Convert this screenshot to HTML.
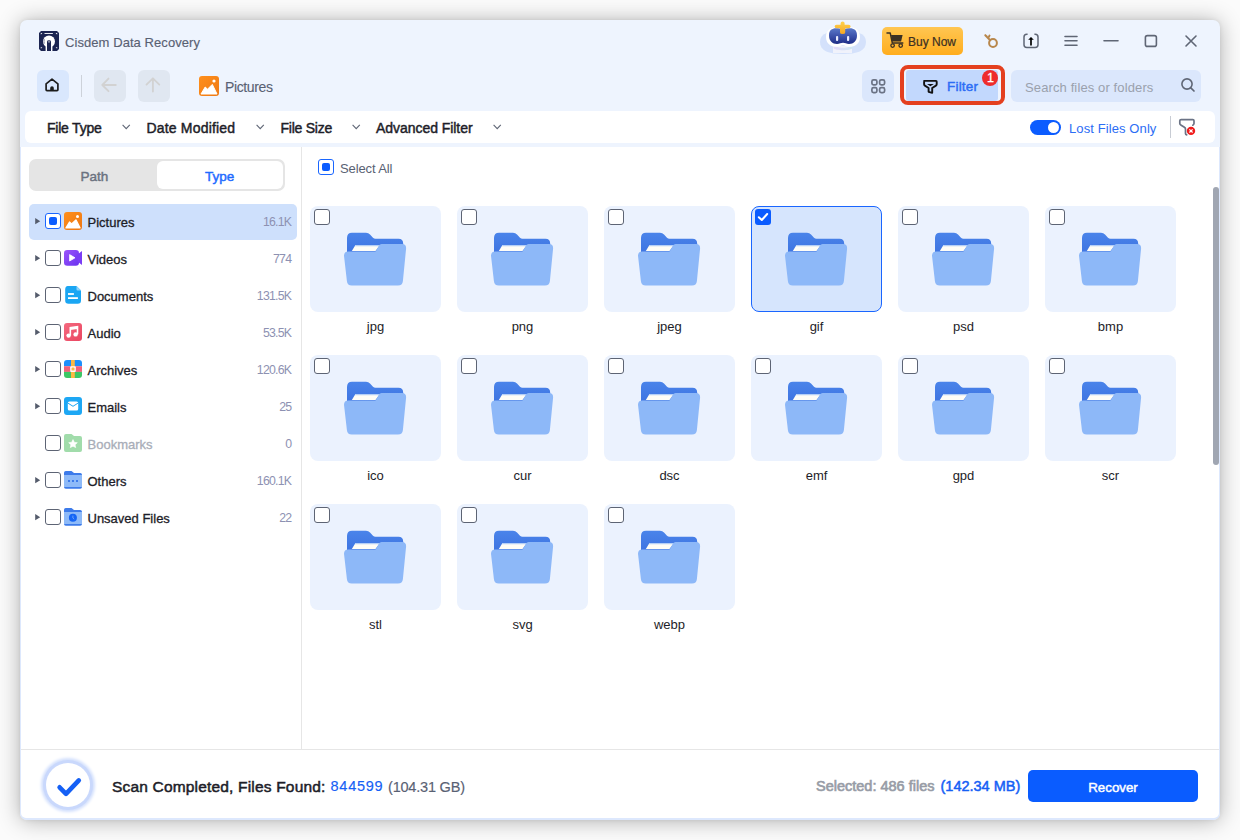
<!DOCTYPE html><html><head><meta charset="utf-8"><style>
*{box-sizing:border-box;margin:0;padding:0}
html,body{width:1240px;height:840px;overflow:hidden;background:#fbfbfb;font-family:"Liberation Sans",sans-serif}
.a{position:absolute}
.t{position:absolute;white-space:nowrap;line-height:1}
svg{position:absolute;overflow:visible}
#win{left:20px;top:20px;width:1200px;height:800px;border-radius:7px;background:#eef4fe;box-shadow:0 1px 22px rgba(0,0,0,.30),0 0 4px rgba(0,0,0,.08)}
.cb{position:absolute;width:16px;height:16px;border:1.3px solid #5d6474;border-radius:3px;background:#fff}
.card{position:absolute;width:131px;height:106px;border-radius:8px;background:#ebf2fe}
.lbl{position:absolute;width:131px;text-align:center;font-size:13px;color:#1d1d28;white-space:nowrap;line-height:1}
</style></head><body>
<div id="win" class="a"></div>
<svg style="left:39px;top:31px" width="20" height="20" viewBox="0 0 20 20">
<path d="M2,0 H18 L20,2 V18 L18,20 H2 L0,18 V2 Z" fill="#1c2552"/>
<rect x="5.4" y="2" width="8.6" height="1.1" rx=".5" fill="#e6e8ef"/>
<path d="M1.8,1.8 L3.4,2.6 L1.8,3.4 Z M18.2,1.8 L16.6,2.6 L18.2,3.4 Z M1.8,16 L3.4,16.8 L1.8,17.6 Z M18.2,16 L16.6,16.8 L18.2,17.6 Z" fill="#fff"/>
<circle cx="10" cy="10.5" r="6" fill="#fff"/>
<rect x="6.6" y="10.5" width="6.8" height="9.5" fill="#fff"/>
<path d="M8,20 V10.6 Q8,9.2 10,9.2 Q12,9.2 12,10.6 V20 Z" fill="#1c2552"/>
<rect x="9.3" y="10.4" width="1.4" height="1" fill="#fff"/>
<path d="M5.4,8.2 Q4.6,10.5 5.4,12.6" fill="none" stroke="#1c2552" stroke-width=".5"/>
</svg>
<div class="t" style="left:65px;top:36px;font-size:13px;color:#596173;-webkit-text-stroke:.15px #596173;letter-spacing:.07px">Cisdem Data Recovery</div>
<svg style="left:815px;top:18px" width="55" height="40" viewBox="0 0 55 40">
<defs><linearGradient id="vis" x1="0" y1="0" x2="0" y2="1"><stop offset="0" stop-color="#5a78c8"/><stop offset=".55" stop-color="#3a4fa8"/><stop offset="1" stop-color="#1e2d86"/></linearGradient>
<linearGradient id="star" x1="0" y1="0" x2="0" y2="1"><stop offset="0" stop-color="#ffd24e"/><stop offset="1" stop-color="#f5a623"/></linearGradient>
<linearGradient id="body" x1="0" y1="0" x2="1" y2="0"><stop offset="0" stop-color="#e3d8fb"/><stop offset="1" stop-color="#cfe8f2"/></linearGradient></defs>
<path d="M5,24 C5,15 14,13 28,13 C42,13 51,15 51,24 C51,33 42,36 28,36 C14,36 5,33 5,24 Z" fill="#d0dffb" opacity=".9"/>
<path d="M18,28 H37 V35 H18 Z" fill="#f0f2fb"/>
<path d="M18.5,26 C20,31 36,31 37.5,26 V30 C36,33 20,33 18.5,30 Z" fill="url(#body)"/>
<path d="M11,19 C11,11 17,8.5 28,8.5 C39,8.5 45,11 45,19 C45,25.5 40.5,28.8 34,28.8 C31,28.8 30,27.3 28,27.3 C26,27.3 25,28.8 22,28.8 C15.5,28.8 11,25.5 11,19 Z" fill="#fff"/>
<path d="M14,17.5 C14,12.2 17,10.3 21,10.3 C24,10.3 25,11 28,11 C31,11 32,10.3 35,10.3 C39,10.3 42,12.2 42,17.5 C42,23 38.5,26 34,26 C31.5,26 30,24.8 28,24.8 C26,24.8 24.5,26 22,26 C17.5,26 14,23 14,17.5 Z" fill="url(#vis)"/>
<rect x="21" y="18" width="2.2" height="5" rx=".9" fill="#e8ecff"/>
<rect x="32" y="18" width="2.2" height="5" rx=".9" fill="#e8ecff"/>
<path d="M25.6,5.2 Q25.6,3.4 27.6,3.4 Q29.6,3.4 29.6,5.2 V6.8 H33.6 Q35.6,6.8 35.6,8.5 Q35.6,10.2 33.6,10.2 H30.2 V14.5 Q30.2,16 27.6,16 Q25,16 25,14.5 V10.2 H21.6 Q19.6,10.2 19.6,8.5 Q19.6,6.8 21.6,6.8 H25.6 Z" fill="url(#star)"/>
</svg>
<div class="a" style="left:882px;top:27px;width:81px;height:28px;border-radius:5px;background:linear-gradient(#ffc652,#ffad1e)"></div>
<svg style="left:886px;top:32px" width="18" height="18" viewBox="0 0 18 18">
<path d="M1,0.9 H4.2 L6.3,10.9 H16.8" fill="none" stroke="#3b3024" stroke-width="1.5" stroke-linejoin="round" stroke-linecap="round"/>
<path d="M5,3.1 H16.6 L15.1,9.4 H6.2 Z" fill="#3b3024"/>
<circle cx="6.6" cy="13.6" r="1.75" fill="none" stroke="#3b3024" stroke-width="1.3"/>
<circle cx="14.7" cy="13.6" r="1.75" fill="none" stroke="#3b3024" stroke-width="1.3"/>
</svg>
<div class="t" style="left:908px;top:35.5px;font-size:12px;color:#3b2f22;-webkit-text-stroke:.2px #3b2f22">Buy Now</div>
<svg style="left:980px;top:30px" width="20" height="20" viewBox="0 0 20 20">
<circle cx="13" cy="13" r="3.9" fill="none" stroke="#b8874c" stroke-width="2"/>
<path d="M10.2,10.2 L5.3,5.3 M5.3,5.3 L6.8,6.6 M8.3,7.9 L9.5,5.6" fill="none" stroke="#b8874c" stroke-width="2" stroke-linecap="round"/>
</svg>
<svg style="left:1023px;top:33px" width="16" height="16" viewBox="0 0 16 16">
<path d="M4.6,1.2 H3.8 Q1,1.2 1,4 V11.8 Q1,14.4 3.8,14.4 H12.2 Q15,14.4 15,11.8 V4 Q15,1.2 12.2,1.2 H11.4" fill="none" stroke="#5f6675" stroke-width="1.5"/>
<path d="M8,11.8 V5.5" stroke="#000" stroke-width="1.7" stroke-linecap="round"/>
<path d="M5.2,6.8 L8,4 L10.8,6.8 Z" fill="#000"/>
</svg>
<svg style="left:1060px;top:30px" width="140" height="20" viewBox="0 0 140 20">
<g stroke="#5f6675" stroke-width="1.6" fill="none" stroke-linecap="round">
<path d="M5,6.5 H17 M5,10.7 H17 M5,15.2 H17"/>
<path d="M44,10.7 H58"/>
<rect x="85.4" y="5.6" width="11" height="10.8" rx="2"/>
<path d="M126,6 L136,16 M136,6 L126,16"/>
</g></svg>
<div class="a" style="left:37px;top:70px;width:32px;height:32px;border-radius:6px;background:#d9e7fd"></div>
<svg style="left:40px;top:72px" width="26" height="26" viewBox="0 0 26 26">
<path d="M6.1,11.8 L12,7.2 L17.9,11.8 V17.8 Q17.9,18.7 17,18.7 H7 Q6.1,18.7 6.1,17.8 Z" fill="none" stroke="#1c1c1c" stroke-width="1.7" stroke-linejoin="round"/>
<path d="M10.2,18.7 V15.9 Q10.2,14.3 12,14.3 Q13.8,14.3 13.8,15.9 V18.7 Z" fill="#1c1c1c"/>
</svg>
<div class="a" style="left:81px;top:75px;width:1px;height:22px;background:#cdd2da"></div>
<div class="a" style="left:94px;top:70px;width:32px;height:32px;border-radius:6px;background:#e0e7f1"></div>
<div class="a" style="left:138px;top:70px;width:32px;height:32px;border-radius:6px;background:#e0e7f1"></div>
<svg style="left:94px;top:70px" width="76" height="32" viewBox="0 0 76 32">
<g stroke="#d2d2d2" stroke-width="1.85" fill="none" stroke-linecap="round" stroke-linejoin="round">
<path d="M21.8,15 H8.3 M14.5,8.6 L8.3,15 L14.5,21.2"/>
<path d="M58.9,21.6 V8.5 M52.5,14.6 L58.9,8.3 L65.3,14.6"/>
</g></svg>
<svg style="left:199px;top:76px" width="20" height="20" viewBox="0 0 20 20">
<defs><linearGradient id="og" x1="0" y1="0" x2="1" y2="1"><stop offset="0" stop-color="#ff8f1c"/><stop offset="1" stop-color="#ee7a15"/></linearGradient></defs>
<rect width="20" height="20" rx="3" fill="url(#og)"/>
<path d="M2,18 L6.2,11 L8.5,13.2 L13.3,8.4 L18,18 Z" fill="#fff" stroke="#fff" stroke-width="1" stroke-linejoin="round"/>
<circle cx="15" cy="5" r="1.6" fill="#fff"/>
</svg>
<div class="t" style="left:225px;top:79.8px;font-size:14px;color:#596173;letter-spacing:-.37px;-webkit-text-stroke:.1px #596173">Pictures</div>
<div class="a" style="left:862px;top:70px;width:32px;height:32px;border-radius:6px;background:#dbe7fc"></div>
<svg style="left:866px;top:74px" width="24" height="24" viewBox="0 0 24 24">
<g fill="none" stroke="#6b7385" stroke-width="1.7">
<rect x="5.9" y="5.9" width="5" height="5" rx="1.6"/><rect x="13.6" y="5.9" width="5" height="5" rx="1.6"/>
<rect x="5.9" y="13.6" width="5" height="5" rx="1.6"/><rect x="13.6" y="13.6" width="5" height="5" rx="1.6"/>
</g></svg>
<div class="a" style="left:900px;top:65px;width:105px;height:40px;border:4px solid #e4401f;border-radius:8px"></div>
<div class="a" style="left:906px;top:70px;width:92px;height:31px;background:#c2d8fd;border-radius:3px"></div>
<svg style="left:918px;top:74px" width="24" height="24" viewBox="0 0 24 24">
<path d="M6.1,6.9 H18 Q18.7,6.9 18.7,7.7 V10.3 Q18.7,11.1 17.9,11.6 L14.2,14 V18.8 L10.6,17.8 V14 L6.9,11.6 Q6.1,11.1 6.1,10.3 V7.7 Q6.1,6.9 6.9,6.9 Z" fill="none" stroke="#111" stroke-width="1.9" stroke-linejoin="round"/>
<path d="M9,10 H15.8 L12.4,12.3 Z" fill="#111"/>
</svg>
<div class="t" style="left:947px;top:80.4px;font-size:13.5px;color:#2c6df5;-webkit-text-stroke:.45px #2c6df5;letter-spacing:.2px">Filter</div>
<div class="a" style="left:982px;top:70px;width:16px;height:16px;border-radius:50%;background:#ee2c2c"></div>
<div class="t" style="left:982.5px;top:72px;width:16px;text-align:center;font-size:12.5px;color:#fff;-webkit-text-stroke:.3px #fff">1</div>
<div class="a" style="left:1011px;top:70px;width:190px;height:32px;border-radius:6px;background:#dbe7fc"></div>
<div class="t" style="left:1025px;top:81px;font-size:13px;color:#9aa1ad;letter-spacing:.12px">Search files or folders</div>
<svg style="left:1175px;top:73px" width="24" height="24" viewBox="0 0 24 24">
<circle cx="12" cy="11" r="5.1" fill="none" stroke="#5f6675" stroke-width="1.6"/>
<path d="M15.8,14.8 L19,18" stroke="#5f6675" stroke-width="1.7" stroke-linecap="round"/>
</svg>
<div class="a" style="left:25px;top:111px;width:1190px;height:32px;background:#fff;border-radius:6px"></div>
<div class="t" style="left:47px;top:121.3px;font-size:14px;color:#1d1d28;-webkit-text-stroke:.45px #1d1d28;letter-spacing:-.22px">File Type</div>
<svg style="left:122px;top:124px" width="9" height="6" viewBox="0 0 9 6"><path d="M.6,.8 L4.2,4.6 L7.8,.8" fill="none" stroke="#5f6675" stroke-width="1.1"/></svg>
<div class="t" style="left:146.5px;top:121.3px;font-size:14px;color:#1d1d28;-webkit-text-stroke:.45px #1d1d28;letter-spacing:.18px">Date Modified</div>
<svg style="left:255.6px;top:124px" width="9" height="6" viewBox="0 0 9 6"><path d="M.6,.8 L4.2,4.6 L7.8,.8" fill="none" stroke="#5f6675" stroke-width="1.1"/></svg>
<div class="t" style="left:280.5px;top:121.3px;font-size:14px;color:#1d1d28;-webkit-text-stroke:.45px #1d1d28;letter-spacing:-.25px">File Size</div>
<svg style="left:351.7px;top:124px" width="9" height="6" viewBox="0 0 9 6"><path d="M.6,.8 L4.2,4.6 L7.8,.8" fill="none" stroke="#5f6675" stroke-width="1.1"/></svg>
<div class="t" style="left:376px;top:121.3px;font-size:14px;color:#1d1d28;-webkit-text-stroke:.45px #1d1d28;letter-spacing:-.05px">Advanced Filter</div>
<svg style="left:492.8px;top:124px" width="9" height="6" viewBox="0 0 9 6"><path d="M.6,.8 L4.2,4.6 L7.8,.8" fill="none" stroke="#5f6675" stroke-width="1.1"/></svg>
<div class="a" style="left:1030px;top:120px;width:31px;height:15px;border-radius:8px;background:#0b5cff"></div>
<div class="a" style="left:1048px;top:122px;width:11px;height:11px;border-radius:50%;background:#fff"></div>
<div class="t" style="left:1069px;top:122px;font-size:13px;color:#2c6df5;letter-spacing:.1px">Lost Files Only</div>
<div class="a" style="left:1170px;top:116px;width:1px;height:22px;background:#c8ccd4"></div>
<svg style="left:1175px;top:115px" width="24" height="24" viewBox="0 0 24 24">
<path d="M17.8,10.2 Q19,9.6 19,8.6 V5.8 Q19,4.6 17.8,4.6 H6.1 Q4.8,4.6 4.8,5.8 V8.6 Q4.8,9.5 5.8,10 L9.4,12.2 Q10.5,12.9 10.5,14 V18.5 Q10.5,19.6 11.7,19.8" fill="none" stroke="#6b7385" stroke-width="1.7" stroke-linecap="round"/>
<circle cx="16" cy="15.9" r="4.2" fill="#f01c1c"/>
<path d="M14.4,14.3 L17.6,17.5 M17.6,14.3 L14.4,17.5" stroke="#fff" stroke-width="1.2"/>
</svg>
<div class="a" style="left:20px;top:147px;width:1200px;height:673px;background:#dde8fd;border-radius:0 0 7px 7px"></div>
<div class="a" style="left:21px;top:147px;width:1198px;height:671px;background:#fff;border-radius:0 0 5px 5px"></div>
<div class="a" style="left:301px;top:147px;width:1px;height:602px;background:#e6e6e6"></div>
<div class="a" style="left:21px;top:749px;width:1198px;height:1px;background:#e6e6e6"></div>
<div class="a" style="left:29px;top:159px;width:256px;height:32px;border-radius:7px;background:#e5e5e5"></div>
<div class="a" style="left:157px;top:161px;width:126px;height:28px;border-radius:6px;background:#fff"></div>
<div class="t" style="left:80.5px;top:169.6px;font-size:13.5px;color:#6b7280;-webkit-text-stroke:.45px #6b7280">Path</div>
<div class="t" style="left:205px;top:169.6px;font-size:13.5px;color:#1f6bff;-webkit-text-stroke:.45px #1f6bff">Type</div>
<div class="a" style="left:29px;top:204px;width:268px;height:36px;border-radius:5px;background:#cee0fc"></div>
<svg style="left:35px;top:218px" width="6" height="7" viewBox="0 0 6 7"><path d="M.2,.1 L5.2,3.2 L.2,6.3 Z" fill="#555c6c"/></svg>
<div class="cb" style="left:45px;top:213px;border-color:#1a66ff"><div class="a" style="left:2.7px;top:2.7px;width:8px;height:8px;border-radius:2px;background:#0b5cff"></div></div>
<svg style="left:64px;top:212px" width="18" height="18" viewBox="0 0 18 18"><defs><linearGradient id="og2" x1="0" y1="0" x2="1" y2="1"><stop offset="0" stop-color="#ff8f1c"/><stop offset="1" stop-color="#ec7714"/></linearGradient></defs>
<rect width="18" height="18" rx="3" fill="url(#og2)"/>
<path d="M2,15.9 L5.5,10 L7.6,11.9 L11.9,7.9 L16,15.9 Z" fill="#fff" stroke="#fff" stroke-width="1.3" stroke-linejoin="round"/>
<circle cx="13.5" cy="4.5" r="1.5" fill="#fff"/></svg>
<div class="t" style="left:87.5px;top:215.5px;font-size:13px;color:#1d1d28;-webkit-text-stroke:.3px #1d1d28">Pictures</div>
<div class="t" style="right:948.7px;top:216px;font-size:12.3px;color:#8d91b2;letter-spacing:-.75px">16.1K</div>
<svg style="left:35px;top:255px" width="6" height="7" viewBox="0 0 6 7"><path d="M.2,.1 L5.2,3.2 L.2,6.3 Z" fill="#555c6c"/></svg>
<div class="cb" style="left:45px;top:250px"></div>
<svg style="left:64px;top:249px" width="18" height="18" viewBox="0 0 18 18"><defs><linearGradient id="vg" x1="0" y1="0" x2="1" y2="1"><stop offset="0" stop-color="#9b55fa"/><stop offset="1" stop-color="#6a32f0"/></linearGradient></defs>
<rect x="0" y="1" width="15" height="15.7" rx="3.2" fill="url(#vg)"/>
<path d="M13.5,5.5 L18,2 V16 L13.5,12.5 Z" fill="#7a3df5"/>
<path d="M5.6,5.6 L11,8.8 L5.6,12 Z" fill="#fff" stroke="#fff" stroke-width=".8" stroke-linejoin="round"/></svg>
<div class="t" style="left:87.5px;top:252.5px;font-size:13px;color:#1d1d28;-webkit-text-stroke:.3px #1d1d28">Videos</div>
<div class="t" style="right:948.7px;top:253px;font-size:12.3px;color:#8d91b2;letter-spacing:-.75px">774</div>
<svg style="left:35px;top:292px" width="6" height="7" viewBox="0 0 6 7"><path d="M.2,.1 L5.2,3.2 L.2,6.3 Z" fill="#555c6c"/></svg>
<div class="cb" style="left:45px;top:287px"></div>
<svg style="left:64px;top:286px" width="18" height="18" viewBox="0 0 18 18"><path d="M3.7,0 H12.5 L17,4.5 V14.5 Q17,17.8 13.7,17.8 H4.5 Q1.2,17.8 1.2,14.5 V3.5 Q1.2,0 3.7,0 Z" fill="#1aa6f3"/>
<path d="M12.5,0 L17,4.5 H13.5 Q12.5,4.5 12.5,3.5 Z" fill="#8dd3fb"/>
<rect x="4" y="7.1" width="5.9" height="1.8" fill="#fff"/><rect x="4" y="11.2" width="9.9" height="1.8" fill="#fff"/></svg>
<div class="t" style="left:87.5px;top:289.5px;font-size:13px;color:#1d1d28;-webkit-text-stroke:.3px #1d1d28">Documents</div>
<div class="t" style="right:948.7px;top:290px;font-size:12.3px;color:#8d91b2;letter-spacing:-.75px">131.5K</div>
<svg style="left:35px;top:329px" width="6" height="7" viewBox="0 0 6 7"><path d="M.2,.1 L5.2,3.2 L.2,6.3 Z" fill="#555c6c"/></svg>
<div class="cb" style="left:45px;top:324px"></div>
<svg style="left:64px;top:323px" width="18" height="18" viewBox="0 0 18 18"><defs><linearGradient id="ag" x1="0" y1="0" x2="1" y2="1"><stop offset="0" stop-color="#f46a80"/><stop offset="1" stop-color="#ea4560"/></linearGradient></defs>
<rect width="18" height="18" rx="3" fill="url(#ag)"/>
<path d="M6.3,12.4 V4.6 L13.5,3.6 V11.2" fill="none" stroke="#fff" stroke-width="1.6"/>
<path d="M6.3,4.6 L13.5,3.6 V6 L6.3,7 Z" fill="#fff"/>
<circle cx="4.6" cy="12.6" r="2.2" fill="#fff"/><circle cx="11.6" cy="11.4" r="2.2" fill="#fff"/></svg>
<div class="t" style="left:87.5px;top:326.5px;font-size:13px;color:#1d1d28;-webkit-text-stroke:.3px #1d1d28">Audio</div>
<div class="t" style="right:948.7px;top:327px;font-size:12.3px;color:#8d91b2;letter-spacing:-.75px">53.5K</div>
<svg style="left:35px;top:366px" width="6" height="7" viewBox="0 0 6 7"><path d="M.2,.1 L5.2,3.2 L.2,6.3 Z" fill="#555c6c"/></svg>
<div class="cb" style="left:45px;top:361px"></div>
<svg style="left:64px;top:360px" width="18" height="18" viewBox="0 0 18 18"><clipPath id="arc"><rect width="18" height="18" rx="3"/></clipPath>
<g clip-path="url(#arc)"><rect width="18" height="6.2" fill="#1e8ffb"/><rect y="6.2" width="18" height="5.7" fill="#f2617a"/><rect y="11.9" width="18" height="6.1" fill="#3cc766"/>
<rect x="7" width="3.8" height="18" fill="#fdb844"/></g>
<rect x="6.2" y="6.2" width="5.6" height="5.7" rx="1" fill="#fff"/><rect x="7.5" y="7.5" width="3" height="3" rx=".6" fill="#fdb844"/></svg>
<div class="t" style="left:87.5px;top:363.5px;font-size:13px;color:#1d1d28;-webkit-text-stroke:.3px #1d1d28">Archives</div>
<div class="t" style="right:948.7px;top:364px;font-size:12.3px;color:#8d91b2;letter-spacing:-.75px">120.6K</div>
<svg style="left:35px;top:403px" width="6" height="7" viewBox="0 0 6 7"><path d="M.2,.1 L5.2,3.2 L.2,6.3 Z" fill="#555c6c"/></svg>
<div class="cb" style="left:45px;top:398px"></div>
<svg style="left:64px;top:397px" width="18" height="18" viewBox="0 0 18 18"><rect width="18" height="18" rx="3" fill="#1da7f4"/>
<path d="M3.8,6 Q3.8,4.4 5.4,4.4 H12.6 Q14.2,4.4 14.2,6 V12 Q14.2,13.5 12.6,13.5 H5.4 Q3.8,13.5 3.8,12 Z" fill="#fff"/>
<path d="M3.8,6 L9,9.3 L14.2,6" fill="none" stroke="#1da7f4" stroke-width="1"/></svg>
<div class="t" style="left:87.5px;top:400.5px;font-size:13px;color:#1d1d28;-webkit-text-stroke:.3px #1d1d28">Emails</div>
<div class="t" style="right:948.7px;top:401px;font-size:12.3px;color:#8d91b2;letter-spacing:-.75px">25</div>
<div class="cb" style="left:45px;top:435px"></div>
<svg style="left:64px;top:434px" width="18" height="18" viewBox="0 0 18 18"><path d="M0,2 Q0,0 2,0 H7.5 L10,2 H16 Q18,2 18,4 V16 Q18,18 16,18 H2 Q0,18 0,16 Z" fill="#a1dcab"/>
<path d="M9,5.6 L10.3,8.3 L13.3,8.7 L11.1,10.7 L11.7,13.6 L9,12.2 L6.3,13.6 L6.9,10.7 L4.7,8.7 L7.7,8.3 Z" fill="#fff" stroke="#fff" stroke-width=".6" stroke-linejoin="round"/></svg>
<div class="t" style="left:87.5px;top:437.5px;font-size:13px;color:#a8adb8;-webkit-text-stroke:.3px #a8adb8">Bookmarks</div>
<div class="t" style="right:948.7px;top:438px;font-size:12.3px;color:#8d91b2;letter-spacing:-.75px">0</div>
<svg style="left:35px;top:477px" width="6" height="7" viewBox="0 0 6 7"><path d="M.2,.1 L5.2,3.2 L.2,6.3 Z" fill="#555c6c"/></svg>
<div class="cb" style="left:45px;top:472px"></div>
<svg style="left:64px;top:471px" width="18" height="18" viewBox="0 0 18 18"><path d="M0,1.8 Q0,0 1.8,0 H7.5 L10,2 H16.2 Q18,2 18,3.8 V16 Q18,17.8 16.2,17.8 H1.8 Q0,17.8 0,16 Z" fill="#3d7bea"/>
<rect x="0" y="4" width="18" height="12" fill="#8ebaf8"/><rect x="4" y="9" width="2" height="2" fill="#3d7bea"/><rect x="8" y="9" width="2" height="2" fill="#3d7bea"/><rect x="12" y="9" width="2" height="2" fill="#3d7bea"/></svg>
<div class="t" style="left:87.5px;top:474.5px;font-size:13px;color:#1d1d28;-webkit-text-stroke:.3px #1d1d28">Others</div>
<div class="t" style="right:948.7px;top:475px;font-size:12.3px;color:#8d91b2;letter-spacing:-.75px">160.1K</div>
<svg style="left:35px;top:514px" width="6" height="7" viewBox="0 0 6 7"><path d="M.2,.1 L5.2,3.2 L.2,6.3 Z" fill="#555c6c"/></svg>
<div class="cb" style="left:45px;top:509px"></div>
<svg style="left:64px;top:508px" width="18" height="18" viewBox="0 0 18 18"><path d="M0,1.8 Q0,0 1.8,0 H7.5 L10,2 H16.2 Q18,2 18,3.8 V16 Q18,17.8 16.2,17.8 H1.8 Q0,17.8 0,16 Z" fill="#3d7bea"/>
<rect x="0" y="4" width="18" height="12" fill="#8ebaf8"/><circle cx="8.9" cy="9.8" r="4" fill="#1565f5"/><path d="M8.9,7.6 V10 L10.2,11.2" fill="none" stroke="#8ebaf8" stroke-width=".7"/></svg>
<div class="t" style="left:87.5px;top:511.5px;font-size:13px;color:#1d1d28;-webkit-text-stroke:.3px #1d1d28">Unsaved Files</div>
<div class="t" style="right:948.7px;top:512px;font-size:12.3px;color:#8d91b2;letter-spacing:-.75px">22</div>
<div class="cb" style="left:318px;top:159px;border-color:#1a66ff"><div class="a" style="left:2.7px;top:2.7px;width:8px;height:8px;border-radius:2px;background:#0b5cff"></div></div>
<div class="t" style="left:340px;top:162px;font-size:13px;color:#596173;letter-spacing:-.12px">Select All</div>
<div class="card" style="left:310px;top:206px">
<svg style="left:30px;top:22px" width="70" height="62" viewBox="0 0 70 62">
<defs><linearGradient id="fb" x1="0" y1="0" x2="0" y2="1"><stop offset="0" stop-color="#4a84ea"/><stop offset="1" stop-color="#3b70df"/></linearGradient></defs>
<path d="M7,10 Q7,4.8 12,4.8 H26 Q28.5,4.8 30,6.5 L33,9.8 Q34,10.7 35.5,10.7 H58.5 Q63.2,10.7 63.2,15.5 V30 H7 Z" fill="url(#fb)"/>
<path d="M11.8,23 L15.5,17 H40 L35.5,23 Z" fill="#fffdf6"/>
<path d="M15.5,17 H40 L39,18.3 H14.7 Z" fill="#b5cff6"/>
<path d="M4,27.8 Q4,23.5 8.3,23.5 H35.5 L39,17.5 Q39.8,16 41.5,16 H62 Q66.3,16 66.1,20.5 L62.9,53 Q62.5,57.6 58,57.6 H11.8 Q7.3,57.6 6.9,53 Z" fill="#8db8f8"/>
</svg>
<div class="cb" style="left:4px;top:3px"></div>
</div>
<div class="lbl" style="left:310px;top:319.5px">jpg</div>
<div class="card" style="left:457px;top:206px">
<svg style="left:30px;top:22px" width="70" height="62" viewBox="0 0 70 62">
<defs><linearGradient id="fb" x1="0" y1="0" x2="0" y2="1"><stop offset="0" stop-color="#4a84ea"/><stop offset="1" stop-color="#3b70df"/></linearGradient></defs>
<path d="M7,10 Q7,4.8 12,4.8 H26 Q28.5,4.8 30,6.5 L33,9.8 Q34,10.7 35.5,10.7 H58.5 Q63.2,10.7 63.2,15.5 V30 H7 Z" fill="url(#fb)"/>
<path d="M11.8,23 L15.5,17 H40 L35.5,23 Z" fill="#fffdf6"/>
<path d="M15.5,17 H40 L39,18.3 H14.7 Z" fill="#b5cff6"/>
<path d="M4,27.8 Q4,23.5 8.3,23.5 H35.5 L39,17.5 Q39.8,16 41.5,16 H62 Q66.3,16 66.1,20.5 L62.9,53 Q62.5,57.6 58,57.6 H11.8 Q7.3,57.6 6.9,53 Z" fill="#8db8f8"/>
</svg>
<div class="cb" style="left:4px;top:3px"></div>
</div>
<div class="lbl" style="left:457px;top:319.5px">png</div>
<div class="card" style="left:604px;top:206px">
<svg style="left:30px;top:22px" width="70" height="62" viewBox="0 0 70 62">
<defs><linearGradient id="fb" x1="0" y1="0" x2="0" y2="1"><stop offset="0" stop-color="#4a84ea"/><stop offset="1" stop-color="#3b70df"/></linearGradient></defs>
<path d="M7,10 Q7,4.8 12,4.8 H26 Q28.5,4.8 30,6.5 L33,9.8 Q34,10.7 35.5,10.7 H58.5 Q63.2,10.7 63.2,15.5 V30 H7 Z" fill="url(#fb)"/>
<path d="M11.8,23 L15.5,17 H40 L35.5,23 Z" fill="#fffdf6"/>
<path d="M15.5,17 H40 L39,18.3 H14.7 Z" fill="#b5cff6"/>
<path d="M4,27.8 Q4,23.5 8.3,23.5 H35.5 L39,17.5 Q39.8,16 41.5,16 H62 Q66.3,16 66.1,20.5 L62.9,53 Q62.5,57.6 58,57.6 H11.8 Q7.3,57.6 6.9,53 Z" fill="#8db8f8"/>
</svg>
<div class="cb" style="left:4px;top:3px"></div>
</div>
<div class="lbl" style="left:604px;top:319.5px">jpeg</div>
<div class="card" style="left:751px;top:206px;background:#d6e5fd;border:1px solid #1a66ff">
<svg style="left:29px;top:21px" width="70" height="62" viewBox="0 0 70 62">
<defs><linearGradient id="fb" x1="0" y1="0" x2="0" y2="1"><stop offset="0" stop-color="#4a84ea"/><stop offset="1" stop-color="#3b70df"/></linearGradient></defs>
<path d="M7,10 Q7,4.8 12,4.8 H26 Q28.5,4.8 30,6.5 L33,9.8 Q34,10.7 35.5,10.7 H58.5 Q63.2,10.7 63.2,15.5 V30 H7 Z" fill="url(#fb)"/>
<path d="M11.8,23 L15.5,17 H40 L35.5,23 Z" fill="#fffdf6"/>
<path d="M15.5,17 H40 L39,18.3 H14.7 Z" fill="#b5cff6"/>
<path d="M4,27.8 Q4,23.5 8.3,23.5 H35.5 L39,17.5 Q39.8,16 41.5,16 H62 Q66.3,16 66.1,20.5 L62.9,53 Q62.5,57.6 58,57.6 H11.8 Q7.3,57.6 6.9,53 Z" fill="#8db8f8"/>
</svg>
<div class="a" style="left:3px;top:2px;width:16px;height:16px;border-radius:3px;background:#0b5cff"></div>
<svg style="left:3px;top:2px" width="16" height="16" viewBox="0 0 16 16"><path d="M3.8,8.2 L6.8,11 L12.2,5" fill="none" stroke="#fff" stroke-width="2" stroke-linecap="round" stroke-linejoin="round"/></svg>
</div>
<div class="lbl" style="left:751px;top:319.5px">gif</div>
<div class="card" style="left:898px;top:206px">
<svg style="left:30px;top:22px" width="70" height="62" viewBox="0 0 70 62">
<defs><linearGradient id="fb" x1="0" y1="0" x2="0" y2="1"><stop offset="0" stop-color="#4a84ea"/><stop offset="1" stop-color="#3b70df"/></linearGradient></defs>
<path d="M7,10 Q7,4.8 12,4.8 H26 Q28.5,4.8 30,6.5 L33,9.8 Q34,10.7 35.5,10.7 H58.5 Q63.2,10.7 63.2,15.5 V30 H7 Z" fill="url(#fb)"/>
<path d="M11.8,23 L15.5,17 H40 L35.5,23 Z" fill="#fffdf6"/>
<path d="M15.5,17 H40 L39,18.3 H14.7 Z" fill="#b5cff6"/>
<path d="M4,27.8 Q4,23.5 8.3,23.5 H35.5 L39,17.5 Q39.8,16 41.5,16 H62 Q66.3,16 66.1,20.5 L62.9,53 Q62.5,57.6 58,57.6 H11.8 Q7.3,57.6 6.9,53 Z" fill="#8db8f8"/>
</svg>
<div class="cb" style="left:4px;top:3px"></div>
</div>
<div class="lbl" style="left:898px;top:319.5px">psd</div>
<div class="card" style="left:1045px;top:206px">
<svg style="left:30px;top:22px" width="70" height="62" viewBox="0 0 70 62">
<defs><linearGradient id="fb" x1="0" y1="0" x2="0" y2="1"><stop offset="0" stop-color="#4a84ea"/><stop offset="1" stop-color="#3b70df"/></linearGradient></defs>
<path d="M7,10 Q7,4.8 12,4.8 H26 Q28.5,4.8 30,6.5 L33,9.8 Q34,10.7 35.5,10.7 H58.5 Q63.2,10.7 63.2,15.5 V30 H7 Z" fill="url(#fb)"/>
<path d="M11.8,23 L15.5,17 H40 L35.5,23 Z" fill="#fffdf6"/>
<path d="M15.5,17 H40 L39,18.3 H14.7 Z" fill="#b5cff6"/>
<path d="M4,27.8 Q4,23.5 8.3,23.5 H35.5 L39,17.5 Q39.8,16 41.5,16 H62 Q66.3,16 66.1,20.5 L62.9,53 Q62.5,57.6 58,57.6 H11.8 Q7.3,57.6 6.9,53 Z" fill="#8db8f8"/>
</svg>
<div class="cb" style="left:4px;top:3px"></div>
</div>
<div class="lbl" style="left:1045px;top:319.5px">bmp</div>
<div class="card" style="left:310px;top:355px">
<svg style="left:30px;top:22px" width="70" height="62" viewBox="0 0 70 62">
<defs><linearGradient id="fb" x1="0" y1="0" x2="0" y2="1"><stop offset="0" stop-color="#4a84ea"/><stop offset="1" stop-color="#3b70df"/></linearGradient></defs>
<path d="M7,10 Q7,4.8 12,4.8 H26 Q28.5,4.8 30,6.5 L33,9.8 Q34,10.7 35.5,10.7 H58.5 Q63.2,10.7 63.2,15.5 V30 H7 Z" fill="url(#fb)"/>
<path d="M11.8,23 L15.5,17 H40 L35.5,23 Z" fill="#fffdf6"/>
<path d="M15.5,17 H40 L39,18.3 H14.7 Z" fill="#b5cff6"/>
<path d="M4,27.8 Q4,23.5 8.3,23.5 H35.5 L39,17.5 Q39.8,16 41.5,16 H62 Q66.3,16 66.1,20.5 L62.9,53 Q62.5,57.6 58,57.6 H11.8 Q7.3,57.6 6.9,53 Z" fill="#8db8f8"/>
</svg>
<div class="cb" style="left:4px;top:3px"></div>
</div>
<div class="lbl" style="left:310px;top:468.5px">ico</div>
<div class="card" style="left:457px;top:355px">
<svg style="left:30px;top:22px" width="70" height="62" viewBox="0 0 70 62">
<defs><linearGradient id="fb" x1="0" y1="0" x2="0" y2="1"><stop offset="0" stop-color="#4a84ea"/><stop offset="1" stop-color="#3b70df"/></linearGradient></defs>
<path d="M7,10 Q7,4.8 12,4.8 H26 Q28.5,4.8 30,6.5 L33,9.8 Q34,10.7 35.5,10.7 H58.5 Q63.2,10.7 63.2,15.5 V30 H7 Z" fill="url(#fb)"/>
<path d="M11.8,23 L15.5,17 H40 L35.5,23 Z" fill="#fffdf6"/>
<path d="M15.5,17 H40 L39,18.3 H14.7 Z" fill="#b5cff6"/>
<path d="M4,27.8 Q4,23.5 8.3,23.5 H35.5 L39,17.5 Q39.8,16 41.5,16 H62 Q66.3,16 66.1,20.5 L62.9,53 Q62.5,57.6 58,57.6 H11.8 Q7.3,57.6 6.9,53 Z" fill="#8db8f8"/>
</svg>
<div class="cb" style="left:4px;top:3px"></div>
</div>
<div class="lbl" style="left:457px;top:468.5px">cur</div>
<div class="card" style="left:604px;top:355px">
<svg style="left:30px;top:22px" width="70" height="62" viewBox="0 0 70 62">
<defs><linearGradient id="fb" x1="0" y1="0" x2="0" y2="1"><stop offset="0" stop-color="#4a84ea"/><stop offset="1" stop-color="#3b70df"/></linearGradient></defs>
<path d="M7,10 Q7,4.8 12,4.8 H26 Q28.5,4.8 30,6.5 L33,9.8 Q34,10.7 35.5,10.7 H58.5 Q63.2,10.7 63.2,15.5 V30 H7 Z" fill="url(#fb)"/>
<path d="M11.8,23 L15.5,17 H40 L35.5,23 Z" fill="#fffdf6"/>
<path d="M15.5,17 H40 L39,18.3 H14.7 Z" fill="#b5cff6"/>
<path d="M4,27.8 Q4,23.5 8.3,23.5 H35.5 L39,17.5 Q39.8,16 41.5,16 H62 Q66.3,16 66.1,20.5 L62.9,53 Q62.5,57.6 58,57.6 H11.8 Q7.3,57.6 6.9,53 Z" fill="#8db8f8"/>
</svg>
<div class="cb" style="left:4px;top:3px"></div>
</div>
<div class="lbl" style="left:604px;top:468.5px">dsc</div>
<div class="card" style="left:751px;top:355px">
<svg style="left:30px;top:22px" width="70" height="62" viewBox="0 0 70 62">
<defs><linearGradient id="fb" x1="0" y1="0" x2="0" y2="1"><stop offset="0" stop-color="#4a84ea"/><stop offset="1" stop-color="#3b70df"/></linearGradient></defs>
<path d="M7,10 Q7,4.8 12,4.8 H26 Q28.5,4.8 30,6.5 L33,9.8 Q34,10.7 35.5,10.7 H58.5 Q63.2,10.7 63.2,15.5 V30 H7 Z" fill="url(#fb)"/>
<path d="M11.8,23 L15.5,17 H40 L35.5,23 Z" fill="#fffdf6"/>
<path d="M15.5,17 H40 L39,18.3 H14.7 Z" fill="#b5cff6"/>
<path d="M4,27.8 Q4,23.5 8.3,23.5 H35.5 L39,17.5 Q39.8,16 41.5,16 H62 Q66.3,16 66.1,20.5 L62.9,53 Q62.5,57.6 58,57.6 H11.8 Q7.3,57.6 6.9,53 Z" fill="#8db8f8"/>
</svg>
<div class="cb" style="left:4px;top:3px"></div>
</div>
<div class="lbl" style="left:751px;top:468.5px">emf</div>
<div class="card" style="left:898px;top:355px">
<svg style="left:30px;top:22px" width="70" height="62" viewBox="0 0 70 62">
<defs><linearGradient id="fb" x1="0" y1="0" x2="0" y2="1"><stop offset="0" stop-color="#4a84ea"/><stop offset="1" stop-color="#3b70df"/></linearGradient></defs>
<path d="M7,10 Q7,4.8 12,4.8 H26 Q28.5,4.8 30,6.5 L33,9.8 Q34,10.7 35.5,10.7 H58.5 Q63.2,10.7 63.2,15.5 V30 H7 Z" fill="url(#fb)"/>
<path d="M11.8,23 L15.5,17 H40 L35.5,23 Z" fill="#fffdf6"/>
<path d="M15.5,17 H40 L39,18.3 H14.7 Z" fill="#b5cff6"/>
<path d="M4,27.8 Q4,23.5 8.3,23.5 H35.5 L39,17.5 Q39.8,16 41.5,16 H62 Q66.3,16 66.1,20.5 L62.9,53 Q62.5,57.6 58,57.6 H11.8 Q7.3,57.6 6.9,53 Z" fill="#8db8f8"/>
</svg>
<div class="cb" style="left:4px;top:3px"></div>
</div>
<div class="lbl" style="left:898px;top:468.5px">gpd</div>
<div class="card" style="left:1045px;top:355px">
<svg style="left:30px;top:22px" width="70" height="62" viewBox="0 0 70 62">
<defs><linearGradient id="fb" x1="0" y1="0" x2="0" y2="1"><stop offset="0" stop-color="#4a84ea"/><stop offset="1" stop-color="#3b70df"/></linearGradient></defs>
<path d="M7,10 Q7,4.8 12,4.8 H26 Q28.5,4.8 30,6.5 L33,9.8 Q34,10.7 35.5,10.7 H58.5 Q63.2,10.7 63.2,15.5 V30 H7 Z" fill="url(#fb)"/>
<path d="M11.8,23 L15.5,17 H40 L35.5,23 Z" fill="#fffdf6"/>
<path d="M15.5,17 H40 L39,18.3 H14.7 Z" fill="#b5cff6"/>
<path d="M4,27.8 Q4,23.5 8.3,23.5 H35.5 L39,17.5 Q39.8,16 41.5,16 H62 Q66.3,16 66.1,20.5 L62.9,53 Q62.5,57.6 58,57.6 H11.8 Q7.3,57.6 6.9,53 Z" fill="#8db8f8"/>
</svg>
<div class="cb" style="left:4px;top:3px"></div>
</div>
<div class="lbl" style="left:1045px;top:468.5px">scr</div>
<div class="card" style="left:310px;top:504px">
<svg style="left:30px;top:22px" width="70" height="62" viewBox="0 0 70 62">
<defs><linearGradient id="fb" x1="0" y1="0" x2="0" y2="1"><stop offset="0" stop-color="#4a84ea"/><stop offset="1" stop-color="#3b70df"/></linearGradient></defs>
<path d="M7,10 Q7,4.8 12,4.8 H26 Q28.5,4.8 30,6.5 L33,9.8 Q34,10.7 35.5,10.7 H58.5 Q63.2,10.7 63.2,15.5 V30 H7 Z" fill="url(#fb)"/>
<path d="M11.8,23 L15.5,17 H40 L35.5,23 Z" fill="#fffdf6"/>
<path d="M15.5,17 H40 L39,18.3 H14.7 Z" fill="#b5cff6"/>
<path d="M4,27.8 Q4,23.5 8.3,23.5 H35.5 L39,17.5 Q39.8,16 41.5,16 H62 Q66.3,16 66.1,20.5 L62.9,53 Q62.5,57.6 58,57.6 H11.8 Q7.3,57.6 6.9,53 Z" fill="#8db8f8"/>
</svg>
<div class="cb" style="left:4px;top:3px"></div>
</div>
<div class="lbl" style="left:310px;top:617.5px">stl</div>
<div class="card" style="left:457px;top:504px">
<svg style="left:30px;top:22px" width="70" height="62" viewBox="0 0 70 62">
<defs><linearGradient id="fb" x1="0" y1="0" x2="0" y2="1"><stop offset="0" stop-color="#4a84ea"/><stop offset="1" stop-color="#3b70df"/></linearGradient></defs>
<path d="M7,10 Q7,4.8 12,4.8 H26 Q28.5,4.8 30,6.5 L33,9.8 Q34,10.7 35.5,10.7 H58.5 Q63.2,10.7 63.2,15.5 V30 H7 Z" fill="url(#fb)"/>
<path d="M11.8,23 L15.5,17 H40 L35.5,23 Z" fill="#fffdf6"/>
<path d="M15.5,17 H40 L39,18.3 H14.7 Z" fill="#b5cff6"/>
<path d="M4,27.8 Q4,23.5 8.3,23.5 H35.5 L39,17.5 Q39.8,16 41.5,16 H62 Q66.3,16 66.1,20.5 L62.9,53 Q62.5,57.6 58,57.6 H11.8 Q7.3,57.6 6.9,53 Z" fill="#8db8f8"/>
</svg>
<div class="cb" style="left:4px;top:3px"></div>
</div>
<div class="lbl" style="left:457px;top:617.5px">svg</div>
<div class="card" style="left:604px;top:504px">
<svg style="left:30px;top:22px" width="70" height="62" viewBox="0 0 70 62">
<defs><linearGradient id="fb" x1="0" y1="0" x2="0" y2="1"><stop offset="0" stop-color="#4a84ea"/><stop offset="1" stop-color="#3b70df"/></linearGradient></defs>
<path d="M7,10 Q7,4.8 12,4.8 H26 Q28.5,4.8 30,6.5 L33,9.8 Q34,10.7 35.5,10.7 H58.5 Q63.2,10.7 63.2,15.5 V30 H7 Z" fill="url(#fb)"/>
<path d="M11.8,23 L15.5,17 H40 L35.5,23 Z" fill="#fffdf6"/>
<path d="M15.5,17 H40 L39,18.3 H14.7 Z" fill="#b5cff6"/>
<path d="M4,27.8 Q4,23.5 8.3,23.5 H35.5 L39,17.5 Q39.8,16 41.5,16 H62 Q66.3,16 66.1,20.5 L62.9,53 Q62.5,57.6 58,57.6 H11.8 Q7.3,57.6 6.9,53 Z" fill="#8db8f8"/>
</svg>
<div class="cb" style="left:4px;top:3px"></div>
</div>
<div class="lbl" style="left:604px;top:617.5px">webp</div>
<div class="a" style="left:1213px;top:187px;width:6px;height:278px;border-radius:3px;background:#a0a6b2"></div>
<div class="a" style="left:43px;top:760px;width:50px;height:50px;border-radius:50%;background:#c9d8fc;box-shadow:0 0 3px 2px #d3e0fd"></div>
<div class="a" style="left:46px;top:763px;width:44px;height:44px;border-radius:50%;background:#fff"></div>
<svg style="left:41px;top:758px" width="54" height="54" viewBox="0 0 54 54">
<path d="M18.6,29.3 L25,35.8 L37.8,22.4" fill="none" stroke="#1560f5" stroke-width="4.6" stroke-linecap="round" stroke-linejoin="round"/>
</svg>
<div class="t" style="left:112px;top:778.7px;font-size:15.5px;color:#1d1d28;-webkit-text-stroke:.5px #1d1d28;letter-spacing:.18px">Scan Completed, Files Found:</div>
<div class="t" style="left:330.5px;top:779.3px;font-size:14.5px;color:#1560f5;letter-spacing:.75px;-webkit-text-stroke:.15px #1560f5">844599</div>
<div class="t" style="left:388px;top:780.4px;font-size:14.5px;color:#596173;letter-spacing:-.2px;-webkit-text-stroke:.15px #596173">(104.31 GB)</div>
<div class="t" style="left:816px;top:779.1px;font-size:14.5px;color:#979ca6;-webkit-text-stroke:.65px #979ca6">Selected: 486 files</div>
<div class="t" style="left:940.5px;top:779.1px;font-size:14.5px;color:#1560f5;-webkit-text-stroke:.5px #1560f5">(142.34 MB)</div>
<div class="a" style="left:1028px;top:770px;width:170px;height:32px;background:#0a5cff;border-radius:5px"></div>
<div class="t" style="left:1028px;top:780.7px;width:170px;text-align:center;font-size:13.3px;color:#fff;-webkit-text-stroke:.45px #fff">Recover</div>
</body></html>
